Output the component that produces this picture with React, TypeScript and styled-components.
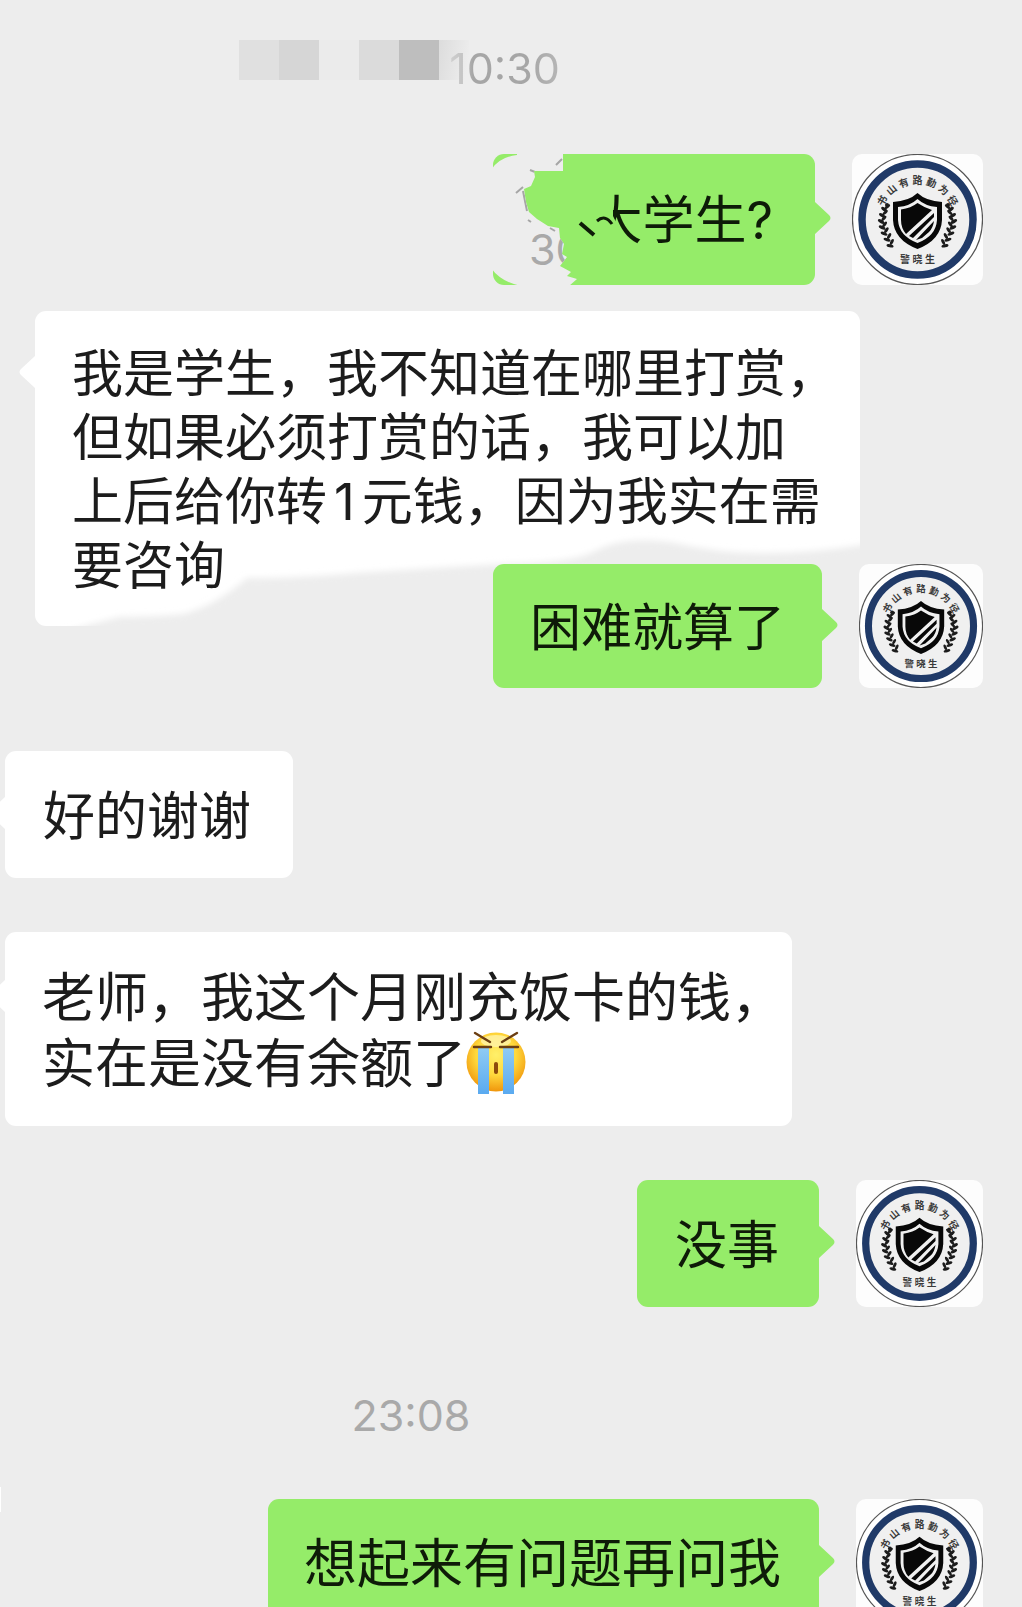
import React from "react";
import styled, { createGlobalStyle } from "styled-components";

const GlobalStyle = createGlobalStyle`
  body {
    margin: 0;
    background: #ededed;
  }
`;

const sans = '"Inter", "Noto Sans CJK SC", sans-serif';

const Chat = styled.main`
  position: relative;
  box-sizing: border-box;
  height: 100vh;
  overflow: hidden;
  padding-top: 40px;
  display: flex;
  flex-direction: column;
  background: #ededed;
  font-family: ${sans};
`;

const TimeRow = styled.div<{ $gap?: number; $shift: number }>`
  display: flex;
  flex: none;
  justify-content: center;
  margin-top: ${(p) => p.$gap ?? 0}px;
  padding-right: ${(p) => p.$shift}px;
`;

const Time = styled.time<{ $faded?: boolean }>`
  font-size: 43px;
  line-height: 56px;
  color: #a9a9a9;
  ${(p) =>
    p.$faded &&
    `background: linear-gradient(90deg, #cfcfcf 0, #c4c4c4 14px, #a6a6a6 24px, #a6a6a6 70%, #b6b6b6 100%);
     background-clip: text;
     -webkit-background-clip: text;
     color: transparent;`}
`;

const Mosaic = styled.div`
  display: flex;
  height: 40px;
`;

const Tile = styled.span<{ $tone: string }>`
  width: 40px;
  background: ${(p) => p.$tone};
`;

const Smudge = styled.span`
  width: 30px;
  margin-right: -20px;
  background: linear-gradient(100deg, #dcdcdc, #ededed 90%);
`;

const Row = styled.div<{ $gap: number; $mine?: boolean; $inset?: number }>`
  position: relative;
  display: flex;
  flex: none;
  justify-content: ${(p) => (p.$mine ? "flex-end" : "flex-start")};
  gap: 37px;
  margin-top: ${(p) => p.$gap}px;
  padding-left: ${(p) => p.$inset ?? 0}px;
  padding-right: ${(p) => (p.$mine ? 39 : 0)}px;
`;

const Bubble = styled.div<{
  $mine?: boolean;
  $size: number;
  $line: number;
  $pad: string;
}>`
  position: relative;
  border-radius: 11px;
  padding: ${(p) => p.$pad};
  background: ${(p) => (p.$mine ? "#95ec69" : "#ffffff")};
  color: ${(p) => (p.$mine ? "#0e1b08" : "#1c1c1c")};
  font-size: ${(p) => p.$size}px;
  line-height: ${(p) => p.$line}px;
  white-space: nowrap;
`;

const Tail = styled.svg<{ $mine?: boolean; $top: number }>`
  position: absolute;
  top: ${(p) => p.$top}px;
  ${(p) => (p.$mine ? "left: 100%;" : "right: 100%; transform: scaleX(-1);")}
  width: 16px;
  height: 34px;
  fill: ${(p) => (p.$mine ? "#95ec69" : "#ffffff")};
`;

const Line = styled.span`
  position: relative;
  display: block;
`;

const Digit = styled.span`
  margin: 0 7px;
`;

const Scratch = styled.svg`
  position: absolute;
  left: 0;
  top: 0;
  overflow: visible;
`;

const Picture = styled.svg<{ $side: number }>`
  flex: none;
  width: ${(p) => p.$side}px;
  height: ${(p) => p.$side}px;
  border-radius: 10px;
  background: #fdfdfd;
`;

const Sob = styled.svg`
  width: 62px;
  height: 64px;
  vertical-align: -12px;
`;

const EdgeTab = styled.span`
  position: absolute;
  left: 0;
  top: 1487px;
  width: 1px;
  height: 25px;
  background: #ffffff;
`;

function Pointer({ mine, top }: { mine?: boolean; top: number }) {
  return (
    <Tail $mine={mine} $top={top} viewBox="0 0 16 34" aria-hidden="true">
      <path d="M-1 0 L0 1 L14 14 Q17 17 14 20 L0 33 L-1 34Z" />
    </Tail>
  );
}

const motto = ["书", "山", "有", "路", "勤", "为", "径"];
const leafX = [33, 31, 30, 31, 33, 36, 39];

function Laurel() {
  return (
    <g fill="#1c1c1c">
      {leafX.map((x, i) => (
        <g key={x + i * 100} transform={`translate(${x} ${56 + i * 6}) rotate(${-i * 4})`}>
          <ellipse cx="-1" cy="0" rx="3.6" ry="1.600" transform="rotate(38)" />
          <ellipse cx="4" cy="-1" rx="3.2" ry="1.500" transform="rotate(-40)" />
        </g>
      ))}
      <circle cx="35" cy="51" r="2" />
    </g>
  );
}

function Avatar({ side }: { side: number }) {
  return (
    <Picture $side={side} viewBox="0 0 131 131" role="img" aria-label="头像">
      <circle cx="65.5" cy="65.5" r="65" fill="#fff" stroke="#555" strokeWidth="1.2" />
      <circle cx="65.5" cy="65.5" r="55.5" fill="#f0f0f0" stroke="#203a68" strokeWidth="7.5" />
      <g
        fontFamily={sans}
        fontSize="10"
        fontWeight="700"
        textAnchor="middle"
        fill="#3a3a3a"
      >
        {motto.map((c, i) => (
          <text key={c} x="65.5" y="30" transform={`rotate(${(i - 3) * 20} 65.5 67)`}>
            {c}
          </text>
        ))}
        <text x="53" y="109">警</text>
        <text x="65.5" y="109">晓</text>
        <text x="78" y="109">生</text>
      </g>
      <Laurel />
      <g transform="translate(131 0) scale(-1 1)">
        <Laurel />
      </g>
      <path
        d="M65.500 39 Q74 47 90 48 V66 Q89 86 65.500 95 Q42 86 41 66 V48 Q57 47 65.500 39Z"
        fill="#080808"
      />
      <path
        d="M65.500 45 Q73 52 85 53 V66 Q84 82 65.500 89 Q47 82 46 66 V53 Q58 52 65.500 45Z"
        fill="#f0f0f0"
      />
      <path
        d="M65.500 49 Q73 54 80 56 L54 80 Q49 74 49 66 V55.500 Q59 54 65.500 49Z"
        fill="#080808"
      />
      <path
        d="M82 59 V63 L61 84 L57 82Z M82 67 Q81 74 77 78 L70 84 L64 86Z"
        fill="#080808"
      />
    </Picture>
  );
}

function SobbingFace() {
  return (
    <Sob viewBox="0 0 62 64" role="img" aria-label="大哭">
      <defs>
        <radialGradient id="face" cx="50%" cy="38%" r="62%">
          <stop offset="0" stopColor="#fff06a" />
          <stop offset="0.55" stopColor="#ffd83c" />
          <stop offset="1" stopColor="#f0960c" />
        </radialGradient>
        <linearGradient id="tears" x1="0" y1="0" x2="0" y2="1">
          <stop offset="0" stopColor="#8fcbf3" />
          <stop offset="1" stopColor="#5aaaf0" />
        </linearGradient>
      </defs>
      <circle cx="30" cy="31" r="29.500" fill="url(#face)" />
      <ellipse cx="30" cy="10" rx="15" ry="6" fill="#fff6b8" opacity="0.7" />
      <path d="M12 17h11v46h-11zM37 17h11v46h-11z" fill="url(#tears)" />
      <path
        d="M8 16h17M34 16h18M9 2l15 9M51 2l-15 9"
        stroke="#6b3e12"
        strokeWidth="2.400"
        strokeLinecap="round"
      />
      <rect x="28" y="31" width="4" height="12" rx="2" fill="#8c4a0c" />
    </Sob>
  );
}

function ErasedCorner() {
  return (
    <Scratch width="200" height="131" viewBox="0 0 200 131" aria-hidden="true">
      <defs>
        <clipPath id="hole">
          <path d="M-2 16 Q6 3 24 1 L24 -1 H70 V17 H41 L42 23 L38 32 L31 35 L33 48 L36 58 L44 65 L55 72 L66 74 L67 84 L71 90 L69 100 L74 103 L67 112 L78 118 L74 122 L84 125 L76 132 H28 Q8 128 -2 114Z" />
        </clipPath>
      </defs>
      <g clipPath="url(#hole)">
        <rect x="-2" y="-2" width="100" height="135" fill="#ededed" />
        <text x="36" y="111" fontSize="43" fontFamily={sans} fill="#a9a9a9">
          30
        </text>
        <path
          d="M63 11 L69 5 M37 16 L42 18 M23 39 L30 33 M30 37 L34 57 M35 66 L38 68 M57 74 L62 77"
          fill="none"
          stroke="#a6a6a6"
          strokeWidth="2"
        />
      </g>
      <path d="M92 38 H120 V62 L127 76 L138 92 V98 H92Z" fill="#95ec69" />
      <path
        d="M87 69 L101 81"
        fill="none"
        stroke="#0e1b08"
        strokeWidth="4"
      />
      <path
        d="M104 67 Q112 60 119 70"
        fill="none"
        stroke="#0e1b08"
        strokeWidth="3"
      />
    </Scratch>
  );
}

function ErasedEdge() {
  return (
    <Scratch width="826" height="315" viewBox="0 0 826 315" aria-hidden="true">
      <defs>
        <filter id="soft" x="-5%" y="-20%" width="110%" height="140%">
          <feGaussianBlur stdDeviation="3" />
        </filter>
        <clipPath id="below">
          <rect x="20" y="200" width="807" height="117" />
        </clipPath>
      </defs>
      <g clipPath="url(#below)">
        <path
          d="M26 322 Q60 312 84 306 Q120 306 148 303 Q180 295 212 267 Q250 268 320 262 L465 253 Q540 252 560 240 Q590 224 640 232 Q720 252 840 232 V340 H20Z"
          fill="#ededed"
          filter="url(#soft)"
        />
      </g>
    </Scratch>
  );
}

export default function App() {
  return (
    <>
      <GlobalStyle />
      <Chat>
        <TimeRow $shift={223}>
          <Mosaic aria-hidden="true">
            <Tile $tone="#e0e0e0" />
            <Tile $tone="#d6d6d6" />
            <Tile $tone="#ebebeb" />
            <Tile $tone="#dbdbdb" />
            <Tile $tone="#bebebe" />
            <Smudge />
          </Mosaic>
          <Time $faded>10:30</Time>
        </TimeRow>

        <Row $mine $gap={58}>
          <Bubble $mine $size={52} $line={71} $pad="31px 42px 29px 97px">
            <Pointer mine top={47} />
            大学生?
            <ErasedCorner />
          </Bubble>
          <Avatar side={131} />
        </Row>

        <Row $gap={26} $inset={35}>
          <Bubble $size={51} $line={64} $pad="31px 23px 28px 37px">
            <Pointer top={44} />
            <ErasedEdge />
            <Line>我是学生，我不知道在哪里打赏，</Line>
            <Line>但如果必须打赏的话，我可以加</Line>
            <Line>
              上后给你转<Digit>1</Digit>元钱，因为我实在需
            </Line>
            <Line>要咨询</Line>
          </Bubble>
        </Row>

        <Row $mine $gap={-62}>
          <Bubble $mine $size={51} $line={64} $pad="32px 37px 28px 37px">
            <Pointer mine top={44} />
            困难就算了
          </Bubble>
          <Avatar side={124} />
        </Row>

        <Row $gap={63} $inset={5}>
          <Bubble $size={52} $line={67} $pad="32px 42px 28px 38px">
            <Pointer top={45} />
            好的谢谢
          </Bubble>
        </Row>

        <Row $gap={54} $inset={5}>
          <Bubble $size={53} $line={66} $pad="33px 8px 29px 37px">
            <Pointer top={47} />
            <Line>老师，我这个月刚充饭卡的钱，</Line>
            <Line>
              实在是没有余额了
              <SobbingFace />
            </Line>
          </Bubble>
        </Row>

        <Row $mine $gap={54}>
          <Bubble $mine $size={52} $line={67} $pad="32px 40px 28px 38px">
            <Pointer mine top={45} />
            没事
          </Bubble>
          <Avatar side={127} />
        </Row>

        <TimeRow $gap={80} $shift={200}>
          <Time>23:08</Time>
        </TimeRow>

        <Row $mine $gap={56}>
          <Bubble $mine $size={53} $line={67} $pad="32px 38px 28px 36px">
            <Pointer mine top={45} />
            想起来有问题再问我
          </Bubble>
          <Avatar side={127} />
        </Row>
        <EdgeTab />
      </Chat>
    </>
  );
}
